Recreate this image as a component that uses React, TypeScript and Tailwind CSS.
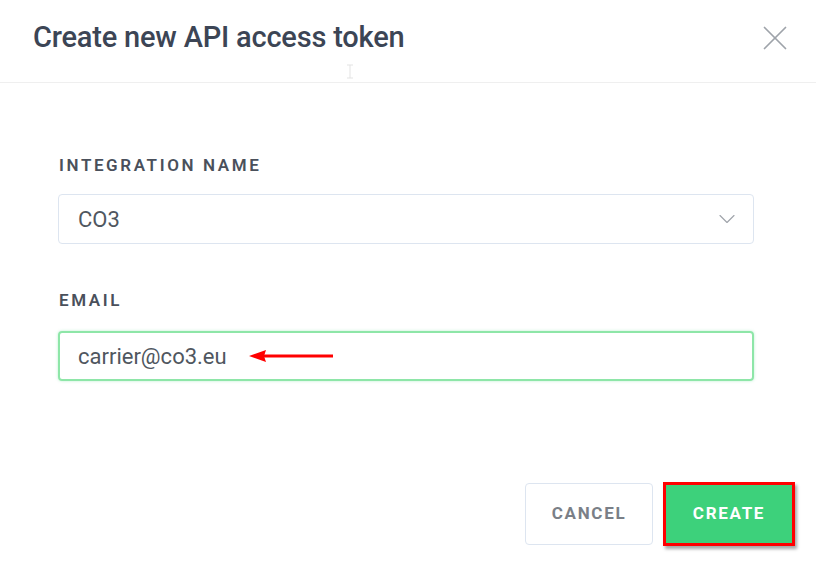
import { ChevronDown, X } from "lucide-react";

const App = () => {
  return (
    <div className="h-[570px] w-[816px] bg-white font-['Roboto',sans-serif] text-[#444c5a]">
      {/* Header */}
      <div className="relative flex h-[83px] items-start justify-between border-b border-[#efefef] pl-[33px] pr-[20px]">
        <h1 className="mt-[23px] text-[29px] font-medium leading-none tracking-[-0.2px] text-[#3c4555]">
          Create new API access token
        </h1>
        <X size={42} strokeWidth={1} className="mt-[17px] text-[#9ea3aa]" />
        {/* stray text cursor */}
        <svg
          className="absolute left-[346px] top-[64px]"
          width="8"
          height="15"
          viewBox="0 0 8 15"
        >
          <path d="M1 1h6M4 1v13M1 14h6" stroke="#e3e3e3" strokeWidth="1" fill="none" />
        </svg>
      </div>

      {/* Body */}
      <div className="pl-[58px] pr-[62px] pt-[73px]">
        <label className="block pl-px text-[17px] font-semibold uppercase leading-[18px] tracking-[2.6px] text-[#4a505b]">
          Integration name
        </label>
        <div className="mt-[20px] flex h-[50px] items-center justify-between rounded-[4px] border border-[#dde5f0] pl-[19px] pr-[12px]">
          <span className="text-[22px] text-[#50575f]">CO3</span>
          <ChevronDown size={28} strokeWidth={1} className="text-[#a0a4ab]" />
        </div>

        <label className="mt-[47px] block pl-px text-[17px] font-semibold uppercase leading-[18px] tracking-[2.6px] text-[#4a505b]">
          Email
        </label>
        <div className="mt-[22px] flex h-[50px] items-center rounded-[4px] border-2 border-[#8ee6a8] pl-[18px] shadow-[0_0_3px_rgba(60,210,120,0.35)]">
          <span className="text-[22px] text-[#50575f]">carrier@co3.eu</span>
          <svg className="ml-[22px]" width="84" height="14" viewBox="0 0 84 14">
            <path d="M0 7 L17 1 L15 7 L17 13 Z" fill="#ff0000" />
            <rect x="14" y="5.5" width="70" height="3" fill="#ff0000" />
          </svg>
        </div>

        {/* Actions */}
        <div className="mt-[102px] flex justify-end gap-[10px]">
          <button className="h-[62px] w-[128px] rounded-[4px] border border-[#dde5f0] bg-white text-[17px] font-bold uppercase tracking-[1.7px] text-[#7a7f87]">
            Cancel
          </button>
          <div className="-mr-[41px] -mt-px border-[3px] border-[#ff0000] shadow-[2px_3px_3px_rgba(0,0,0,0.35)]">
            <button className="h-[58px] w-[126px] bg-[#3dd17b] text-[17px] font-bold uppercase tracking-[1.7px] text-white">
              Create
            </button>
          </div>
        </div>
      </div>
    </div>
  );
};

export default App;
